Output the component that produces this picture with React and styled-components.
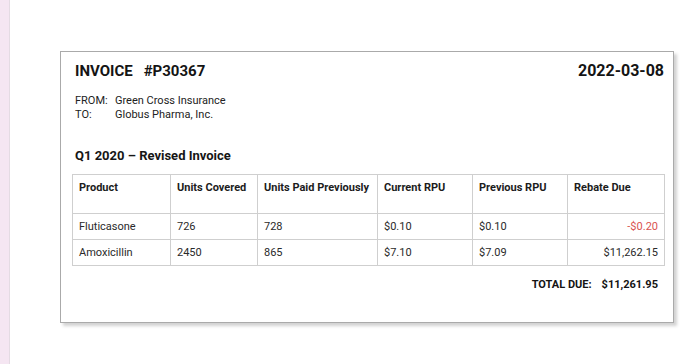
import React from 'react';
import styled, { createGlobalStyle } from 'styled-components';

const GlobalStyle = createGlobalStyle`
  html, body {
    margin: 0;
    padding: 0;
    background: #ffffff;
  }
  body {
    font-family: Roboto, "Liberation Sans", Arial, sans-serif;
    color: #1f1f1f;
  }
`

const Page = styled.div`
  display: flex;
  width: 700px;
  height: 364px;
  overflow: hidden;
`

const SideStrip = styled.div`
  flex: 0 0 9px;
  background: #f5e6f2;
  border-right: 1px solid #e4dbe3;
`

const Main = styled.div`
  flex: 1;
  padding: 51px 0 0 50px;
`

const Card = styled.div`
  box-sizing: border-box;
  width: 614px;
  height: 272px;
  padding: 10px 9px 0 11px;
  background: #fff;
  border: 1px solid #aaaaaa;
  box-shadow: 3px 3px 3px rgba(0, 0, 0, 0.18);
`

const HeaderRow = styled.div`
  display: flex;
  justify-content: space-between;
  align-items: baseline;
  padding-left: 3px;
  height: 18px;
  line-height: 18px;
`

const Title = styled.div`
  font-size: 15px;
  font-weight: 700;
  color: #141414;
  & span + span {
    margin-left: 11px;
  }
`

const DateText = styled.div`
  font-size: 16px;
  font-weight: 700;
  color: #141414;
`

const Parties = styled.div`
  display: grid;
  grid-template-columns: 40px auto;
  margin-top: 14px;
  padding-left: 3px;
  font-size: 11px;
  line-height: 14px;
  color: #222;
`

const SectionTitle = styled.div`
  margin-top: 26px;
  padding-left: 3px;
  font-size: 13px;
  font-weight: 700;
  line-height: 16px;
  color: #161616;
`

const Table = styled.table`
  margin-top: 10px;
  border-collapse: collapse;
  table-layout: fixed;
  width: 592px;
  font-size: 11px;
  color: #2a2a2a;
`

const HeadCell = styled.th`
  height: 32px;
  padding: 6px 6px 0;
  border: 1px solid #cfcfcf;
  text-align: left;
  vertical-align: top;
  font-weight: 700;
  line-height: 14px;
  color: #1c1c1c;
  white-space: nowrap;
`

const Cell = styled.td`
  height: 25px;
  padding: 0 6px;
  border: 1px solid #cfcfcf;
  text-align: ${({ $right }) => ($right ? 'right' : 'left')};
  color: ${({ $negative }) => ($negative ? '#d9534f' : '#2a2a2a')};
  line-height: 14px;
  white-space: nowrap;
`

const Total = styled.div`
  display: flex;
  justify-content: flex-end;
  margin-top: 12px;
  padding-right: 6px;
  font-size: 11px;
  font-weight: 700;
  line-height: 14px;
  color: #141414;
  & span + span {
    margin-left: 10px;
  }
`

const columns = [98, 87, 120, 95, 95, 97]

const headings = ['Product', 'Units Covered', 'Units Paid Previously', 'Current RPU', 'Previous RPU', 'Rebate Due']

const rows = [
  { product: 'Fluticasone', covered: '726', paid: '728', current: '$0.10', previous: '$0.10', rebate: '-$0.20' },
  { product: 'Amoxicillin', covered: '2450', paid: '865', current: '$7.10', previous: '$7.09', rebate: '$11,262.15' },
]

export default function App() {
  return (
    <>
      <GlobalStyle />
      <Page>
        <SideStrip />
        <Main>
          <Card>
            <HeaderRow>
              <Title>
                <span>INVOICE</span>
                <span>#P30367</span>
              </Title>
              <DateText>2022-03-08</DateText>
            </HeaderRow>
            <Parties>
              <span>FROM:</span>
              <span>Green Cross Insurance</span>
              <span>TO:</span>
              <span>Globus Pharma, Inc.</span>
            </Parties>
            <SectionTitle>Q1 2020 – Revised Invoice</SectionTitle>
            <Table>
              <colgroup>
                {columns.map((w, i) => (
                  <col key={i} style={{ width: w }} />
                ))}
              </colgroup>
              <thead>
                <tr>
                  {headings.map((h) => (
                    <HeadCell key={h}>{h}</HeadCell>
                  ))}
                </tr>
              </thead>
              <tbody>
                {rows.map((r) => (
                  <tr key={r.product}>
                    <Cell>{r.product}</Cell>
                    <Cell>{r.covered}</Cell>
                    <Cell>{r.paid}</Cell>
                    <Cell>{r.current}</Cell>
                    <Cell>{r.previous}</Cell>
                    <Cell $right $negative={r.rebate.startsWith('-')}>{r.rebate}</Cell>
                  </tr>
                ))}
              </tbody>
            </Table>
            <Total>
              <span>TOTAL DUE:</span>
              <span>$11,261.95</span>
            </Total>
          </Card>
        </Main>
      </Page>
    </>
  )
}
